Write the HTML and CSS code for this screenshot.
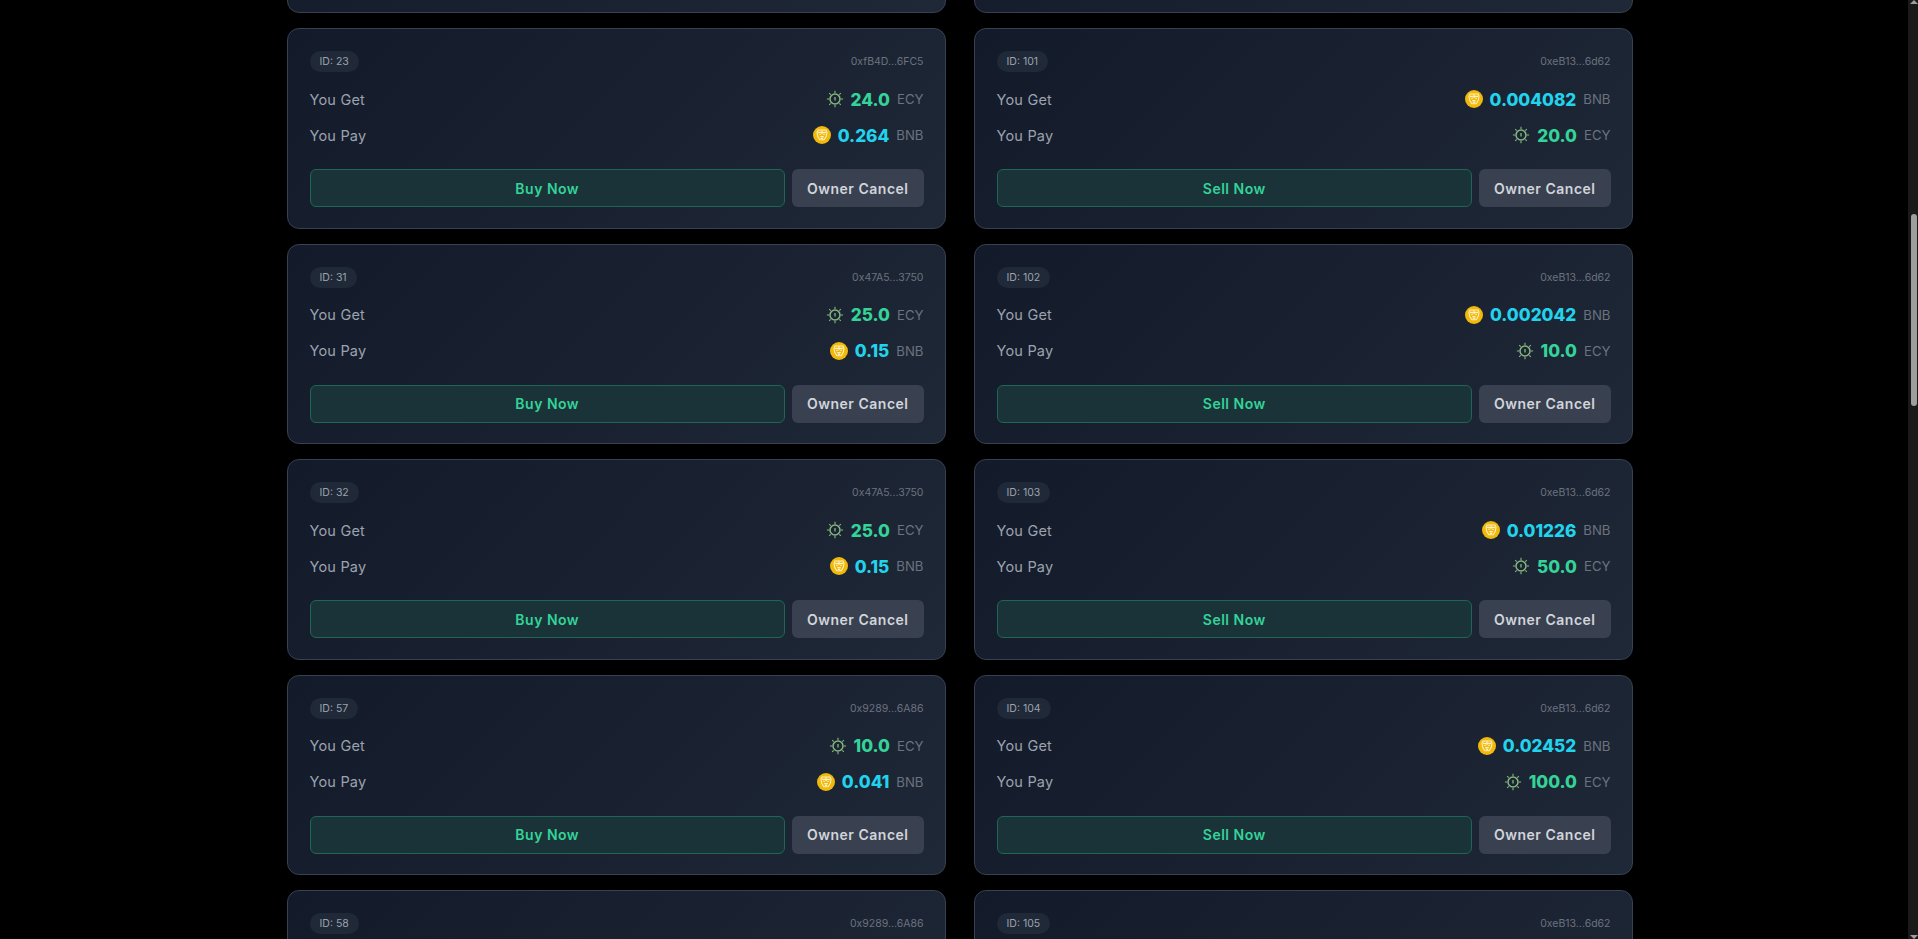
FILE: index.html
```html
<!DOCTYPE html>
<html lang="en">
<head>
    <meta charset="UTF-8">
    <title>Order Book</title>
    <link rel="stylesheet" href="styles.css">
</head>
<body>
    <svg class="icon-defs" width="0" height="0" aria-hidden="true">
        <symbol id="ecy" viewBox="0 0 18 18">
            <circle cx="9" cy="9" r="5" fill="none" stroke="#86b97f" stroke-width="1.5"/>
            <path d="M9 7v3.4" stroke="#86b97f" stroke-width="1.3" fill="none"/>
            <path d="M9 .8v2.2M9 15v2.2M.9 9h2.2M14.9 9h2.2M3.2 3.2l1.5 1.5M13.3 13.3l1.5 1.5M3.2 14.8l1.5-1.5M13.3 4.7l1.5-1.5" stroke="#86b97f" stroke-width="1.1" fill="none"/>
        </symbol>
        <symbol id="bnb" viewBox="0 0 18 18">
            <circle cx="9" cy="9" r="9" fill="#f0b90b"/>
            <path d="M5 4h8l1 2.4-.8 4.2-2 3.2H6.800l-2-3.200L4 6.400z" fill="none" stroke="#fff0bd" stroke-width="1.1"/>
            <path d="M5 6.400h8M6 8.200h2.200M9.800 8.200H12M9 4v4M7.200 10.600h3.600M7.800 12.400h2.400" fill="none" stroke="#fff0bd" stroke-width="1.1"/>
        </symbol>
    </svg>

    <div class="page">
        <main class="orders">
            <div class="order-grid">

                <div class="card"></div>
                <div class="card"></div>

                <div class="card">
                    <div class="card-top"><span class="badge">ID: 23</span><span class="addr">0xfB4D...6FC5</span></div>
                    <div class="row"><span class="label">You Get</span><span class="amount"><svg class="coin"><use href="#ecy"/></svg><b class="val ecy">24.0</b><span class="unit">ECY</span></span></div>
                    <div class="row"><span class="label">You Pay</span><span class="amount"><svg class="coin"><use href="#bnb"/></svg><b class="val bnb">0.264</b><span class="unit">BNB</span></span></div>
                    <div class="actions"><button class="btn-trade">Buy Now</button><button class="btn-cancel">Owner Cancel</button></div>
                </div>
                <div class="card">
                    <div class="card-top"><span class="badge">ID: 101</span><span class="addr">0xeB13...6d62</span></div>
                    <div class="row"><span class="label">You Get</span><span class="amount"><svg class="coin"><use href="#bnb"/></svg><b class="val bnb">0.004082</b><span class="unit">BNB</span></span></div>
                    <div class="row"><span class="label">You Pay</span><span class="amount"><svg class="coin"><use href="#ecy"/></svg><b class="val ecy">20.0</b><span class="unit">ECY</span></span></div>
                    <div class="actions"><button class="btn-trade">Sell Now</button><button class="btn-cancel">Owner Cancel</button></div>
                </div>

                <div class="card">
                    <div class="card-top"><span class="badge">ID: 31</span><span class="addr">0x47A5...3750</span></div>
                    <div class="row"><span class="label">You Get</span><span class="amount"><svg class="coin"><use href="#ecy"/></svg><b class="val ecy">25.0</b><span class="unit">ECY</span></span></div>
                    <div class="row"><span class="label">You Pay</span><span class="amount"><svg class="coin"><use href="#bnb"/></svg><b class="val bnb">0.15</b><span class="unit">BNB</span></span></div>
                    <div class="actions"><button class="btn-trade">Buy Now</button><button class="btn-cancel">Owner Cancel</button></div>
                </div>
                <div class="card">
                    <div class="card-top"><span class="badge">ID: 102</span><span class="addr">0xeB13...6d62</span></div>
                    <div class="row"><span class="label">You Get</span><span class="amount"><svg class="coin"><use href="#bnb"/></svg><b class="val bnb">0.002042</b><span class="unit">BNB</span></span></div>
                    <div class="row"><span class="label">You Pay</span><span class="amount"><svg class="coin"><use href="#ecy"/></svg><b class="val ecy">10.0</b><span class="unit">ECY</span></span></div>
                    <div class="actions"><button class="btn-trade">Sell Now</button><button class="btn-cancel">Owner Cancel</button></div>
                </div>

                <div class="card">
                    <div class="card-top"><span class="badge">ID: 32</span><span class="addr">0x47A5...3750</span></div>
                    <div class="row"><span class="label">You Get</span><span class="amount"><svg class="coin"><use href="#ecy"/></svg><b class="val ecy">25.0</b><span class="unit">ECY</span></span></div>
                    <div class="row"><span class="label">You Pay</span><span class="amount"><svg class="coin"><use href="#bnb"/></svg><b class="val bnb">0.15</b><span class="unit">BNB</span></span></div>
                    <div class="actions"><button class="btn-trade">Buy Now</button><button class="btn-cancel">Owner Cancel</button></div>
                </div>
                <div class="card">
                    <div class="card-top"><span class="badge">ID: 103</span><span class="addr">0xeB13...6d62</span></div>
                    <div class="row"><span class="label">You Get</span><span class="amount"><svg class="coin"><use href="#bnb"/></svg><b class="val bnb">0.01226</b><span class="unit">BNB</span></span></div>
                    <div class="row"><span class="label">You Pay</span><span class="amount"><svg class="coin"><use href="#ecy"/></svg><b class="val ecy">50.0</b><span class="unit">ECY</span></span></div>
                    <div class="actions"><button class="btn-trade">Sell Now</button><button class="btn-cancel">Owner Cancel</button></div>
                </div>

                <div class="card">
                    <div class="card-top"><span class="badge">ID: 57</span><span class="addr">0x9289...6A86</span></div>
                    <div class="row"><span class="label">You Get</span><span class="amount"><svg class="coin"><use href="#ecy"/></svg><b class="val ecy">10.0</b><span class="unit">ECY</span></span></div>
                    <div class="row"><span class="label">You Pay</span><span class="amount"><svg class="coin"><use href="#bnb"/></svg><b class="val bnb">0.041</b><span class="unit">BNB</span></span></div>
                    <div class="actions"><button class="btn-trade">Buy Now</button><button class="btn-cancel">Owner Cancel</button></div>
                </div>
                <div class="card">
                    <div class="card-top"><span class="badge">ID: 104</span><span class="addr">0xeB13...6d62</span></div>
                    <div class="row"><span class="label">You Get</span><span class="amount"><svg class="coin"><use href="#bnb"/></svg><b class="val bnb">0.02452</b><span class="unit">BNB</span></span></div>
                    <div class="row"><span class="label">You Pay</span><span class="amount"><svg class="coin"><use href="#ecy"/></svg><b class="val ecy">100.0</b><span class="unit">ECY</span></span></div>
                    <div class="actions"><button class="btn-trade">Sell Now</button><button class="btn-cancel">Owner Cancel</button></div>
                </div>

                <div class="card">
                    <div class="card-top"><span class="badge">ID: 58</span><span class="addr">0x9289...6A86</span></div>
                </div>
                <div class="card">
                    <div class="card-top"><span class="badge">ID: 105</span><span class="addr">0xeB13...6d62</span></div>
                </div>

            </div>
        </main>

        <div class="scrollbar">
            <span class="arrow-up"></span>
            <span class="thumb"></span>
            <span class="arrow-down"></span>
        </div>
    </div>
</body>
</html>
```

FILE: styles.css
```css
* {
    box-sizing: border-box;
}
html, body {
    margin: 0;
    height: 100%;
    background: #000;
    overflow: hidden;
}
body {
    font-family: Inter, 'Open Sans', sans-serif;
}
.icon-defs {
    display: block;
    height: 0;
}
.page {
    display: flex;
    height: 939px;
}
.orders {
    flex: 1;
    overflow: hidden;
    padding: 0 275px 0 287px;
}
.order-grid {
    display: grid;
    grid-template-columns: 1fr 1fr;
    gap: 15.1px 28px;
    margin-top: -187.6px;
}

/* order card */
.card {
    height: 200.5px;
    padding: 22px 21.5px 21px;
    border: 1px solid #374151;
    border-radius: 12px;
    background: linear-gradient(135deg, #131a2a, #1f2836);
}
.card-top {
    display: flex;
    justify-content: space-between;
    align-items: center;
    height: 21px;
    margin-bottom: 13.5px;
}
.badge {
    padding: 0 10px;
    line-height: 21px;
    border-radius: 11px;
    background: #1f2937;
    color: #9ca3af;
    font-size: 10.5px;
}
.addr {
    color: #6b7280;
    font-size: 10.5px;
}
.row {
    display: flex;
    justify-content: space-between;
    align-items: center;
    height: 27px;
    margin-bottom: 9px;
}
.label {
    color: #9ca3af;
    font-size: 14.5px;
    letter-spacing: 0.2px;
}
.amount {
    display: flex;
    align-items: center;
    gap: 7px;
}
.coin {
    width: 18px;
    height: 18px;
}
.val {
    font-size: 17.2px;
    font-weight: 800;
}
.val.ecy {
    color: #34d399;
}
.val.bnb {
    color: #22d3ee;
}
.unit {
    color: #6b7280;
    font-size: 13.2px;
}
.actions {
    display: flex;
    gap: 7px;
    margin-top: 20.5px;
}
.actions button {
    height: 38px;
    border-radius: 6px;
    font-family: inherit;
    font-size: 14px;
    font-weight: 600;
    letter-spacing: 0.5px;
}
.btn-trade {
    flex: 1;
    border: 1px solid #1e6655;
    background: #1a3338;
    color: #34d399;
}
.btn-cancel {
    width: 131.5px;
    border: none;
    background: #394150;
    color: #d1d5db;
}

/* page scrollbar */
.scrollbar {
    position: relative;
    width: 10px;
    background: #1a1a1a;
}
.thumb {
    position: absolute;
    top: 214px;
    left: 3px;
    width: 6px;
    height: 192px;
    border-radius: 3px;
    background: #9e9e9e;
}
.arrow-up, .arrow-down {
    position: absolute;
    left: 2px;
    width: 0;
    height: 0;
    border-left: 4px solid transparent;
    border-right: 4px solid transparent;
}
.arrow-up {
    top: 0;
    border-bottom: 4px solid #9e9e9e;
}
.arrow-down {
    bottom: 0;
    border-top: 4px solid #9e9e9e;
}
```
